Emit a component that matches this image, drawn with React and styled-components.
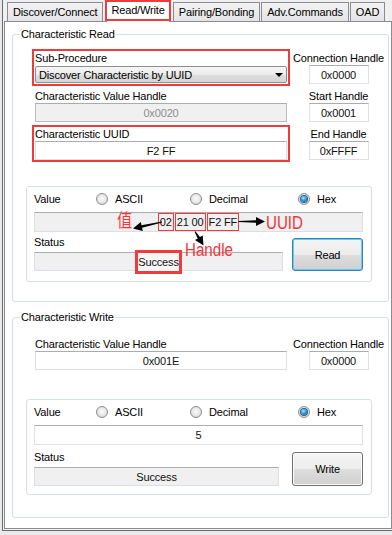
import React from 'react';
import styled, { createGlobalStyle } from 'styled-components';

const GlobalStyle = createGlobalStyle`
  html, body {
    margin: 0;
    padding: 0;
    background: #e9e9e9;
  }
  body {
    font-family: "Liberation Sans", Arial, sans-serif;
    font-size: 11px;
    letter-spacing: -0.15px;
    color: #000;
  }
`;

const MARK_RED = '#ee3b3b';
const NOTE_RED = '#f2363b';

const Window = styled.div`
  box-sizing: border-box;
  width: 392px;
  height: 535px;
  padding: 0 0 4px 2px;
  overflow: hidden;
`;

const Frame = styled.div`
  box-sizing: border-box;
  height: 100%;
  display: flex;
  flex-direction: column;
  border-left: 1px solid #6b6b6b;
  border-bottom: 1px solid #6b6b6b;
  padding: 0 0 1px 1px;
  background: #f0f0f0;
`;

const TabStrip = styled.div`
  display: flex;
  align-items: flex-end;
  gap: 1px;
  height: 21px;
  padding-left: 3px;
`;

const Tab = styled.div`
  position: relative;
  z-index: ${p => (p.$active ? 2 : 1)};
  box-sizing: border-box;
  height: ${p => (p.$active ? 21 : 19)}px;
  margin: 0 ${p => (p.$active ? 1 : 0)}px;
  padding: 0 ${p => (p.$active ? 4 : 5)}px;
  line-height: ${p => (p.$active ? 17 : 18)}px;
  white-space: nowrap;
  border: ${p => (p.$marked ? `2px solid ${MARK_RED}` : '1px solid #898c95')};
  border-bottom-style: ${p => (p.$marked ? 'solid' : 'none')};
  background: ${p => (p.$active ? '#fff' : 'linear-gradient(#f3f3f3, #e4e4e4)')};

  &::after {
    content: '';
    display: ${p => (p.$active ? 'block' : 'none')};
    position: absolute;
    left: 0;
    right: 0;
    bottom: -3px;
    height: 1px;
    background: #fff;
  }
`;

const Panel = styled.div`
  flex: 1;
  box-sizing: border-box;
  background: #fff;
  border: 1px solid #898c95;
  padding: 5px 2px 0 7px;
`;

const Group = styled.fieldset`
  margin: ${p => p.$top || 0}px 0 0;
  padding: ${p => p.$padTop}px 3px ${p => p.$padBottom}px 13px;
  border: 1px solid #d5dfe5;
  border-radius: 3px;
  min-width: 0;
`;

const Legend = styled.legend`
  margin-left: -6px;
  padding: 0 1px;
  line-height: 14px;
`;

const HandleGrid = styled.div`
  display: grid;
  grid-template-columns: 258px 1fr;
  row-gap: 1px;
  margin-left: 6px;
`;

const Cell = styled.div`
  display: flex;
  flex-direction: column;
  align-items: ${p => (p.$center ? 'center' : 'stretch')};
  border: 2px solid ${p => (p.$marked ? MARK_RED : 'transparent')};
  padding: 0 1px;
`;

const Label = styled.span`
  line-height: 14px;
  white-space: nowrap;
`;

const TextField = styled.div`
  box-sizing: border-box;
  width: ${p => (p.$w ? `${p.$w}px` : 'auto')};
  height: ${p => p.$h || 19}px;
  display: flex;
  align-items: center;
  justify-content: center;
  gap: 1px;
  border: 1px solid ${p => (p.$tone === 'disabled' ? '#b9bcc0' : '#dcdfe5')};
  border-top-color: ${p => (p.$tone === 'disabled' ? '#a9acb0' : '#abadb3')};
  background: ${p => (p.$tone === 'normal' ? '#fff' : '#f0f0f0')};
  color: ${p => (p.$tone === 'disabled' ? '#8d8d8d' : '#111')};
  white-space: nowrap;
`;

const Combo = styled.div`
  box-sizing: border-box;
  height: 17px;
  margin-top: 1px;
  display: flex;
  align-items: center;
  justify-content: space-between;
  padding: 0 3px;
  border: 1px solid #8e8f8f;
  border-radius: 2px;
  background: linear-gradient(#f6f6f6 0%, #ececec 50%, #dedede 51%, #d5d5d5 100%);

  &::after {
    content: '';
    border-left: 4px solid transparent;
    border-right: 4px solid transparent;
    border-top: 4px solid #000;
  }
`;

const ValueGroup = styled.div`
  position: relative;
  box-sizing: border-box;
  width: 346px;
  margin-top: ${p => p.$top}px;
  padding: 4px 8px ${p => p.$padBottom}px 7px;
  border: 1px solid #d5dfe5;
  border-radius: 3px;
`;

const OptionRow = styled.div`
  display: grid;
  grid-template-columns: 62px 94px 108px 1fr;
  align-items: center;
  height: 16px;
  margin-bottom: 5px;
`;

const Radio = styled.span`
  display: flex;
  align-items: center;
  gap: 7px;
`;

const RadioDot = styled.span`
  box-sizing: border-box;
  width: 12px;
  height: 12px;
  border-radius: 50%;
  border: 1px solid #8c8e90;
  background: radial-gradient(circle at 50% 45%, #fbfbfb 0%, #e6e6e6 55%, #cbcbcb 100%);
  display: flex;
  align-items: center;
  justify-content: center;

  &::after {
    content: '';
    display: ${p => (p.$checked ? 'block' : 'none')};
    width: 6px;
    height: 6px;
    border-radius: 50%;
    background: radial-gradient(circle at 40% 35%, #a6e6ff 0%, #2b93d8 50%, #0b4a7d 100%);
    box-shadow: 0 0 0 1px #24618f;
  }
`;

const BottomRow = styled.div`
  display: grid;
  grid-template-columns: ${p => p.$statusW}px 71px;
  justify-content: space-between;
  align-items: end;
  margin-top: ${p => p.$gap}px;
`;

const StatusCol = styled.div`
  display: flex;
  flex-direction: column;
`;

const StatusLabel = styled.span`
  line-height: 16px;
  margin-bottom: 2px;
`;

const Button = styled.button`
  box-sizing: border-box;
  width: 71px;
  height: ${p => p.$h}px;
  padding: 0;
  font: inherit;
  letter-spacing: inherit;
  color: #000;
  border: 1px solid ${p => (p.$focused ? '#3c7fb1' : '#707070')};
  border-radius: 3px;
  background: linear-gradient(#f4f4f4 0%, #ececec 50%, #dddddd 51%, #d0d0d0 100%);
  box-shadow: inset 0 0 0 1px ${p => (p.$focused ? '#5fcdf5' : '#fbfbfb')};
`;

const Mark = styled.span`
  box-sizing: border-box;
  height: 100%;
  display: flex;
  align-items: center;
  padding: 0 1px;
  border: 1px solid ${MARK_RED};
`;

const StrongMark = styled.span`
  margin: -3px 0;
  padding: 1px 0;
  line-height: 16px;
  border: 3px solid ${MARK_RED};
  background: #f6f6f6;
`;

const Note = styled.span`
  position: absolute;
  left: ${p => p.$left}px;
  top: ${p => p.$top}px;
  font-family: "Liberation Sans", "Noto Sans CJK SC", sans-serif;
  font-size: 18px;
  line-height: 18px;
  letter-spacing: 0;
  color: ${NOTE_RED};
  transform: scaleX(0.84);
  transform-origin: left top;
  white-space: nowrap;
`;

const Overlay = styled.svg`
  position: absolute;
  left: 0;
  top: 0;
  overflow: visible;
  pointer-events: none;
`;

// tapered arrow from (x1,y1) to the tip (x2,y2)
const arrowPoints = (x1, y1, x2, y2) => {
  const len = Math.hypot(x2 - x1, y2 - y1);
  const ux = (x2 - x1) / len;
  const uy = (y2 - y1) / len;
  const nx = -uy;
  const ny = ux;
  const bx = x2 - ux * 9;
  const by = y2 - uy * 9;
  const pt = (x, y, w) => `${(x + nx * w).toFixed(1)},${(y + ny * w).toFixed(1)}`;
  return [
    pt(x1, y1, 0.5),
    pt(bx, by, 1.3),
    pt(bx, by, 4.5),
    pt(x2, y2, 0),
    pt(bx, by, -4.5),
    pt(bx, by, -1.3),
    pt(x1, y1, -0.5),
  ].join(' ');
};

const Arrows = () => (
  <Overlay width="344" height="94">
    <polygon points={arrowPoints(135, 35, 106, 41.5)} fill="#000" />
    <polygon points={arrowPoints(211.5, 34.5, 238, 34.5)} fill="#000" />
    <polygon points={arrowPoints(168, 44.5, 176.5, 58.5)} fill="#000" />
  </Overlay>
);

const RadioOptions = () => (
  <OptionRow>
    <span>Value</span>
    <Radio><RadioDot />ASCII</Radio>
    <Radio><RadioDot />Decimal</Radio>
    <Radio><RadioDot $checked />Hex</Radio>
  </OptionRow>
);

const tabs = ['Discover/Connect', 'Read/Write', 'Pairing/Bonding', 'Adv.Commands', 'OAD'];

const App = () => (
  <>
    <GlobalStyle />
    <Window>
      <Frame>
        <TabStrip>
          {tabs.map(t => (
            <Tab key={t} $active={t === 'Read/Write'} $marked={t === 'Read/Write'}>{t}</Tab>
          ))}
        </TabStrip>
        <Panel>
          <Group $padTop={8} $padBottom={19}>
            <Legend>Characteristic Read</Legend>
            <HandleGrid>
              <Cell $marked>
                <Label>Sub-Procedure</Label>
                <Combo>Discover Characteristic by UUID</Combo>
              </Cell>
              <Cell $center>
                <Label>Connection Handle</Label>
                <TextField $w={60} $tone="normal">0x0000</TextField>
              </Cell>
              <Cell>
                <Label>Characteristic Value Handle</Label>
                <TextField $tone="disabled">0x0020</TextField>
              </Cell>
              <Cell $center>
                <Label>Start Handle</Label>
                <TextField $w={60} $tone="normal">0x0001</TextField>
              </Cell>
              <Cell $marked>
                <Label>Characteristic UUID</Label>
                <TextField $tone="normal">F2 FF</TextField>
              </Cell>
              <Cell $center>
                <Label>End Handle</Label>
                <TextField $w={60} $tone="normal">0xFFFF</TextField>
              </Cell>
            </HandleGrid>

            <ValueGroup $top={24} $padBottom={10}>
              <RadioOptions />
              <TextField $h={20} $tone="readonly">
                <Mark>02</Mark>
                <Mark>21 00</Mark>
                <Mark>F2 FF</Mark>
              </TextField>
              <BottomRow $statusW={249} $gap={2}>
                <StatusCol>
                  <StatusLabel>Status</StatusLabel>
                  <TextField $tone="readonly">
                    <StrongMark>Success</StrongMark>
                  </TextField>
                </StatusCol>
                <Button $h={33} $focused>Read</Button>
              </BottomRow>
              <Arrows />
              <Note $left={90} $top={25}>值</Note>
              <Note $left={239} $top={27}>UUID</Note>
              <Note $left={158} $top={54}>Handle</Note>
            </ValueGroup>
          </Group>

          <Group $top={8} $padTop={11} $padBottom={22}>
            <Legend>Characteristic Write</Legend>
            <HandleGrid>
              <Cell>
                <Label>Characteristic Value Handle</Label>
                <TextField $tone="normal">0x001E</TextField>
              </Cell>
              <Cell $center>
                <Label>Connection Handle</Label>
                <TextField $w={60} $tone="normal">0x0000</TextField>
              </Cell>
            </HandleGrid>

            <ValueGroup $top={27} $padBottom={8}>
              <RadioOptions />
              <TextField $h={20} $tone="normal">5</TextField>
              <BottomRow $statusW={245} $gap={4}>
                <StatusCol>
                  <StatusLabel>Status</StatusLabel>
                  <TextField $tone="readonly">Success</TextField>
                </StatusCol>
                <Button $h={34}>Write</Button>
              </BottomRow>
            </ValueGroup>
          </Group>
        </Panel>
      </Frame>
    </Window>
  </>
);

export default App;
